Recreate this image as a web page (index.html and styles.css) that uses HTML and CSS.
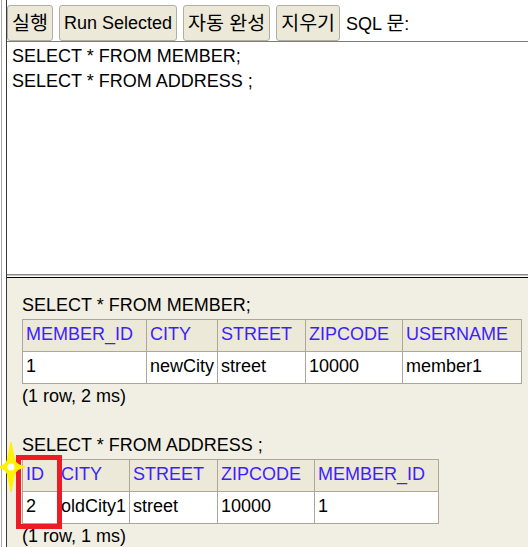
FILE: index.html
```html
<!DOCTYPE html>
<html lang="ko">
<head>
<meta charset="utf-8">
<title>H2 Console</title>
<link rel="stylesheet" href="styles.css">
</head>
<body>
<div class="page">
  <div class="gutter"></div>
  <div class="main">
    <div class="toolbar">
      <button class="btn"><span class="ko">실행</span></button>
      <button class="btn">Run Selected</button>
      <button class="btn"><span class="ko">자동 완성</span></button>
      <button class="btn"><span class="ko">지우기</span></button>
      <span class="label">SQL <span class="ko">문</span>:</span>
    </div>
    <div class="editor">
      <div class="line">SELECT * FROM MEMBER;</div>
      <div class="line">SELECT * FROM ADDRESS ;</div>
    </div>
    <div class="splitter"></div>
    <div class="results">
      <div class="stmt">SELECT * FROM MEMBER;</div>
      <table class="result">
        <tr><th>MEMBER_ID</th><th>CITY</th><th>STREET</th><th>ZIPCODE</th><th>USERNAME</th></tr>
        <tr><td>1</td><td>newCity</td><td>street</td><td>10000</td><td>member1</td></tr>
      </table>
      <div class="count">(1 row, 2 ms)</div>
      <div class="stmt stmt-next">SELECT * FROM ADDRESS ;</div>
      <table class="result">
        <tr><th>ID</th><th>CITY</th><th>STREET</th><th>ZIPCODE</th><th>MEMBER_ID</th></tr>
        <tr><td>2</td><td>oldCity1</td><td>street</td><td>10000</td><td>1</td></tr>
      </table>
      <div class="count">(1 row, 1 ms)</div>
    </div>
  </div>
</div>
<div class="highlight"></div>
<svg class="sparkle" width="26" height="50" viewBox="0 0 26 50">
  <path d="M12 0 L15.5 18 Q17 23 26 25 Q17 27 15.5 32 L12 50 L8.5 32 Q7 27 0 25 Q7 23 8.5 18 Z" fill="#fff200" stroke="#fff200" stroke-width="1.2" stroke-linejoin="round"/>
  <circle cx="12" cy="25" r="3.5" fill="#ffffff"/>
</svg>
</body>
</html>
```
FILE: styles.css
```css
html, body {
  margin: 0;
  padding: 0;
  height: 100%;
  overflow: hidden;
  background: #ffffff;
  font-family: "Liberation Sans", "Noto Sans CJK KR", Arial, sans-serif;
  font-size: 18px;
  color: #000;
}

.page {
  display: flex;
  height: 100vh;
}

.gutter {
  margin-left: 1px;
  width: 4px;
  border-left: 1px solid #a8a8a8;
  background: #ffffff;
}

.main {
  flex: 1;
  display: flex;
  flex-direction: column;
  border-left: 1px solid #3a3a3a;
  min-width: 0;
}

.toolbar {
  display: flex;
  align-items: center;
  gap: 6px;
  padding-top: 5px;
  height: 36px;
  background: #ffffff;
}

.btn {
  height: 36px;
  padding: 0 4px;
  margin: 0;
  border: 1px solid #b2afa2;
  border-radius: 3px;
  background: #ece9d8;
  font-family: "Liberation Sans", "Noto Sans CJK KR", Arial, sans-serif;
  font-size: 18px;
  color: #000;
  line-height: 21px;
  white-space: nowrap;
}

.ko {
  font-family: "Noto Sans CJK KR", sans-serif;
  font-size: 19.5px;
  line-height: 21px;
}

.label {
  line-height: 21px;
  white-space: nowrap;
}

.editor {
  box-sizing: border-box;
  height: 234px;
  border-top: 1px solid #7c7c7c;
  border-bottom: 1px solid #8a8a8a;
  padding: 2px 5px;
  background: #ffffff;
}

.line {
  line-height: 25px;
  white-space: pre;
}

.splitter {
  height: 1px;
  border-top: 1px solid #c4c4c4;
  border-bottom: 1px solid #000000;
  background: #ffffff;
}

.results {
  flex: 1;
  background: #f1efe4;
  padding: 17px 0 0 15px;
  line-height: 21px;
}

.stmt {
  white-space: pre;
}

.stmt-next {
  margin-top: 28px;
}

.result {
  border-collapse: collapse;
  margin-top: 3px;
}

.result th,
.result td {
  border: 1px solid #aca899;
  padding: 4px 3px 6px 3px;
  text-align: left;
  white-space: nowrap;
  font-size: 18px;
  line-height: 21px;
}

.result th {
  background: #ece9d8;
  color: #3d1eff;
  font-weight: normal;
  padding-right: 13px;
}

.result td {
  background: #ffffff;
}

.count {
  margin-top: 2px;
}

.highlight {
  position: absolute;
  left: 16px;
  top: 455px;
  width: 46px;
  height: 74px;
  box-sizing: border-box;
  border: 5px solid #ed1c24;
}

.sparkle {
  position: absolute;
  left: -1px;
  top: 442px;
}
```
